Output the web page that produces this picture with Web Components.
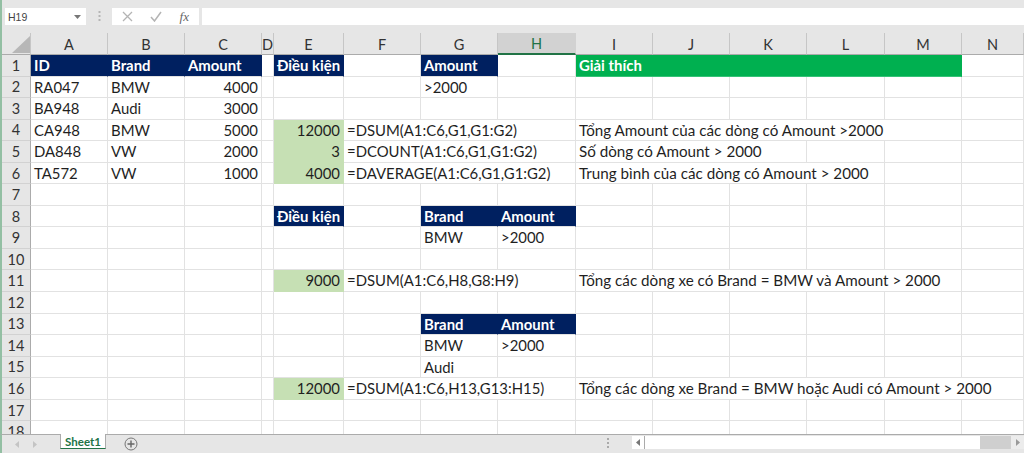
<!DOCTYPE html>
<html lang="vi"><head><meta charset="utf-8"><title>Sheet1</title>
<style>
html,body{margin:0;padding:0;height:100%;overflow:hidden;background:#e6e6e6}
body{font-family:Lato,"Noto Sans",sans-serif;color:#1a1a1a}
</style></head>
<body>
<x-app>
  <x-formula-bar slot="top" name="H19"></x-formula-bar>
  <x-sheet slot="main"></x-sheet>
  <x-tabbar slot="bottom"><x-tab>Sheet1</x-tab></x-tabbar>
</x-app>
<script>
function def(name,html,init){
  customElements.define(name,class extends HTMLElement{
    constructor(){super();this.attachShadow({mode:'open'}).innerHTML=html;}
    connectedCallback(){if(init&&!this._i){this._i=1;init.call(this);}}
  });
}
def('x-app',`<style>
:host{display:flex;flex-direction:column;height:453px;width:1024px;overflow:hidden;background:#e6e6e6}
.main{flex:1;min-height:0;overflow:hidden;display:flex;border-left:2px solid #93bfa3}
.top{height:33px;flex:none}
.bottom{height:19px;flex:none;display:flex}
</style>
<div class="top"><slot name="top"></slot></div>
<div class="main"><slot name="main"></slot></div>
<div class="bottom"><slot name="bottom"></slot></div>`);

def('x-formula-bar',`<style>
:host{display:flex;height:33px;box-sizing:border-box;padding:8px 0 0 3px;background:#e6e6e6;border-left:2px solid #93bfa3;font-family:"Liberation Sans",sans-serif;font-size:10.5px;color:#444}
.box{background:#fff;height:17px;display:flex;align-items:center;box-sizing:border-box}
.name{width:81px;padding:0 5px 0 3px;justify-content:space-between}
.grip{width:26px;display:flex;justify-content:center;align-items:center;height:17px}
.btns{width:87px;padding:0 10px;justify-content:space-between}
.fx{font:italic 13px "Liberation Serif",serif;color:#666}
.input{flex:1;margin-left:3px}
svg{display:block}
</style>
<div class="box name"><span id="n"></span><svg width="7" height="4" viewBox="0 0 7 4"><path d="M0 0h7L3.500 4z" fill="#777"/></svg></div>
<div class="grip"><svg width="3" height="11" viewBox="0 0 3 11" fill="#b5b5b5"><rect x="0.500" y="0" width="2" height="2"/><rect x="0.500" y="4" width="2" height="2"/><rect x="0.500" y="8" width="2" height="2"/></svg></div>
<div class="box btns">
<svg width="11" height="11" viewBox="0 0 11 11"><path d="M1 1l9 9M10 1l-9 9" stroke="#b4b4b4" stroke-width="1.300" fill="none"/></svg>
<svg width="12" height="11" viewBox="0 0 12 11"><path d="M1 6l3.500 4L11 1" stroke="#b4b4b4" stroke-width="1.500" fill="none"/></svg>
<span class="fx">fx</span></div>
<div class="box input"></div>`,function(){this.shadowRoot.getElementById('n').textContent=this.getAttribute('name');});

def('x-col-head',`<style>
:host{display:flex;align-items:center;justify-content:center;box-sizing:border-box;background:#e6e6e6;border-right:1px solid #c6c6c6;border-bottom:1px solid #ababab;font-size:14.5px;color:#333;padding-top:1px}
:host([active]){background:#d2d2d2;color:#217346;border-bottom:2px solid #217346;border-right-color:#d2d2d2}
</style><slot></slot>`);
def('x-row-head',`<style>
:host{display:flex;align-items:center;justify-content:center;box-sizing:border-box;background:#e6e6e6;border-right:1px solid #ababab;border-bottom:1px solid #d2d2d2;font-size:14.5px;color:#333}
</style><slot></slot>`);
def('x-corner',`<style>
:host{display:block;background:#e6e6e6;box-sizing:border-box;border-right:1px solid #c6c6c6;border-bottom:1px solid #ababab}
svg{display:block;margin:3px 0 0 10px}
</style><svg width="18" height="17" viewBox="0 0 18 17"><path d="M18 0v17H0z" fill="#b7b7b7"/></svg>`);
def('x-cell',`<style>
:host{display:block;box-sizing:border-box;border-right:1px solid #e2e2e2;border-bottom:1px solid #e2e2e2;background:#fff;font-size:14.9px;line-height:21px;padding:0 3px;white-space:nowrap;color:#1f1f1f;overflow:hidden}
:host([num]){text-align:right;padding-right:3px}
:host([note]){font-size:15.2px}
:host([fill=navy]){background:#002060;color:#fff;font-weight:700;border-right-color:#002060}
:host([fill=green]){background:#00b050;color:#fff;font-weight:700;border-right-color:#00b050;border-bottom-color:#35c277}
:host([fill=light]){background:#c6e0b4;border-right-color:#c6e0b4;border-bottom-color:#c6e0b4}
</style><slot></slot>`);

const COLS=['A','B','C','D','E','F','G','H','I','J','K','L','M','N'];
const N='navy',G='light';
const DATA={
1:{A:['ID',N],B:['Brand',N],C:['Amount',N],E:['Điều kiện',N],G:['Amount',N],I:['Giải thích','green',5]},
2:{A:['RA047'],B:['BMW'],C:['4000',0,1,1],G:['>2000']},
3:{A:['BA948'],B:['Audi'],C:['3000',0,1,1]},
4:{A:['CA948'],B:['BMW'],C:['5000',0,1,1],E:['12000',G,1,1],F:['=DSUM(A1:C6,G1,G1:G2)',0,3],I:['Tổng Amount của các dòng có Amount >2000',0,5,0,1]},
5:{A:['DA848'],B:['VW'],C:['2000',0,1,1],E:['3',G,1,1],F:['=DCOUNT(A1:C6,G1,G1:G2)',0,3],I:['Số dòng có Amount > 2000',0,3,0,1]},
6:{A:['TA572'],B:['VW'],C:['1000',0,1,1],E:['4000',G,1,1],F:['=DAVERAGE(A1:C6,G1,G1:G2)',0,3],I:['Trung bình của các dòng có Amount > 2000',0,4,0,1]},
8:{E:['Điều kiện',N],G:['Brand',N],H:['Amount',N]},
9:{G:['BMW'],H:['>2000']},
11:{E:['9000',G,1,1],F:['=DSUM(A1:C6,H8,G8:H9)',0,3],I:['Tổng các dòng xe có Brand = BMW và Amount > 2000',0,5,0,1]},
13:{G:['Brand',N],H:['Amount',N]},
14:{G:['BMW'],H:['>2000']},
15:{G:['Audi']},
16:{E:['12000',G,1,1],F:['=DSUM(A1:C6,H13,G13:H15)',0,3],I:['Tổng các dòng xe Brand = BMW hoặc Audi có Amount > 2000',0,6,0,1]}
};
def('x-sheet',`<style>
:host{display:block;flex:1;min-width:0;overflow:hidden;background:#fff}
.g{display:grid;grid-template-columns:29px 77px 77px 77px 12px 70px 77px 77px 78px 77px 77px 77px 78px 77px 62px;grid-template-rows:22px repeat(18,21.55px);width:1022px}
</style><div class="g" id="g"></div>`,function(){
  const g=this.shadowRoot.getElementById('g');
  const add=(t,txt)=>{const e=document.createElement(t);if(txt!=null)e.textContent=txt;g.appendChild(e);return e;};
  add('x-corner');
  COLS.forEach(c=>{const h=add('x-col-head',c);if(c==='H')h.setAttribute('active','');});
  for(let r=1;r<=18;r++){
    add('x-row-head',r);
    let skip=0;
    COLS.forEach(c=>{
      if(skip>0){skip--;return;}
      const d=(DATA[r]||{})[c];
      const e=add('x-cell',d?d[0]:null);
      if(d){
        if(d[1])e.setAttribute('fill',d[1]);
        if(d[2]>1){e.style.gridColumn='span '+d[2];skip=d[2]-1;}
        if(d[3])e.setAttribute('num','');
        if(d[4])e.setAttribute('note','');
      }
    });
  }
});
def('x-tab',`<style>
:host{display:flex;align-items:center;justify-content:center;width:46px;height:15px;margin-top:-1px;box-sizing:border-box;background:#fff;border-bottom:1px solid #217346;border-left:1px solid #ababab;border-right:1px solid #ababab;color:#217346;font-weight:700;font-size:11.5px}
</style><slot></slot>`);
def('x-tabbar',`<style>
:host{display:flex;flex:1;height:19px;box-sizing:border-box;background:#e6e6e6;border-top:1px solid #ababab;border-left:2px solid #93bfa3}
.nav{width:58px;display:flex;gap:14px;padding:6px 0 0 13px;box-sizing:border-box;align-items:flex-start}
.plus{margin:2px 0 0 18px}
.sp{flex:1}
.grip{width:25px;padding-top:3px;box-sizing:border-box}
.scroll{display:flex;height:13px;margin-top:1px;width:392px}
.b{width:12px;background:#fff;display:flex;align-items:center;justify-content:center;border-right:1px solid #ababab}
.t{flex:none;width:335px;background:#fff}
.th{width:31px;background:#cfcfcf}
.e{flex:1;background:#ececec;display:flex;align-items:center;justify-content:center}
svg{display:block}
</style>
<div class="nav"><svg width="4" height="7" viewBox="0 0 4 7"><path d="M4 0v7L0 3.500z" fill="#c4c4c4"/></svg><svg width="4" height="7" viewBox="0 0 4 7"><path d="M0 0v7l4-3.500z" fill="#c4c4c4"/></svg></div>
<slot></slot>
<svg class="plus" width="14" height="14" viewBox="0 0 14 14"><circle cx="7" cy="7" r="6" fill="none" stroke="#777" stroke-width="1"/><path d="M7 3.500v7M3.500 7h7" stroke="#666" stroke-width="1.400"/></svg>
<div class="sp"></div>
<div class="grip"><svg width="3" height="11" viewBox="0 0 3 11" fill="#aaa"><rect width="2" height="2"/><rect y="4" width="2" height="2"/><rect y="8" width="2" height="2"/></svg></div>
<div class="scroll"><div class="b"><svg width="4" height="7" viewBox="0 0 4 7"><path d="M4 0v7L0 3.500z" fill="#777"/></svg></div><div class="t"></div><div class="th"></div><div class="e"><svg width="4" height="7" viewBox="0 0 4 7"><path d="M0 0v7l4-3.500z" fill="#999"/></svg></div></div>`);
</script>
</body></html>
